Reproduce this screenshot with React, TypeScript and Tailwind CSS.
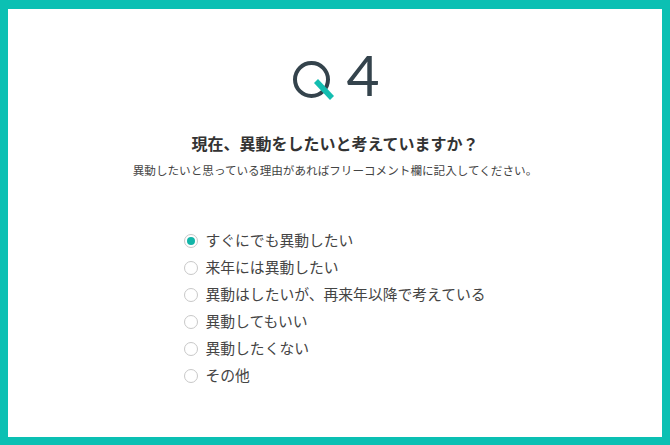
const options = [
  "すぐにでも異動したい",
  "来年には異動したい",
  "異動はしたいが、再来年以降で考えている",
  "異動してもいい",
  "異動したくない",
  "その他",
];

function QLogo() {
  return (
    <svg width="42" height="42" viewBox="0 0 42 42" className="block">
      <circle cx="19.5" cy="19.5" r="16.5" fill="none" stroke="#34434c" strokeWidth="4" />
      <line x1="24" y1="21" x2="40" y2="38" stroke="#13bdb0" strokeWidth="5.5" />
    </svg>
  );
}

export default function App() {
  const selected = 0;
  return (
    <div
      className="h-[445px] w-[670px] bg-[#0bc0b3] pt-[9px] pl-[8px] pr-[8px] pb-[8px]"
      style={{ fontFamily: '"Noto Sans CJK JP", "Noto Sans", sans-serif' }}
    >
      <div className="flex h-full w-full flex-col items-center bg-white pt-[51px]">
        {/* Question number */}
        <div className="flex h-[41px] items-start gap-[12px] pl-[2px]">
          <QLogo />
          <span
            className="mt-[-14px] text-[57px] leading-none font-normal text-[#34434c]"
            style={{ fontFamily: "Lato, sans-serif" }}
          >
            4
          </span>
        </div>

        <h1 className="mt-[30px] text-[16px] leading-6 font-bold text-[#333]">
          現在、異動をしたいと考えていますか？
        </h1>
        <p className="mt-[6px] text-[11.6px] leading-[18px] text-[#444]">
          異動したいと思っている理由があればフリーコメント欄に記入してください。
        </p>

        {/* Choices */}
        <ul className="mt-[48px] flex flex-col">
          {options.map((o, i) => (
            <li key={o} className="flex h-[27px] items-center gap-[7px] text-[14.8px] text-[#444]">
              <span className="flex h-[14px] w-[14px] items-center justify-center rounded-full border border-[#c8c8c8] bg-white">
                {i === selected && <span className="h-[8px] w-[8px] rounded-full bg-[#13b5a8]" />}
              </span>
              <span>{o}</span>
            </li>
          ))}
        </ul>
      </div>
    </div>
  );
}
